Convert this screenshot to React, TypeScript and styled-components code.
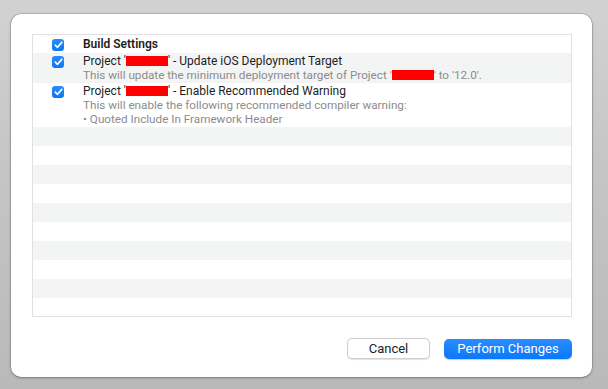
import React from "react";
import styled, { createGlobalStyle } from "styled-components";

const Global = createGlobalStyle`
  html, body { margin: 0; padding: 0; }
  body {
    width: 608px;
    height: 389px;
    overflow: hidden;
    font-family: Roboto, "Liberation Sans", sans-serif;
    -webkit-font-smoothing: antialiased;
  }
`;

const Backdrop = styled.div`
  width: 608px;
  height: 389px;
  box-sizing: border-box;
  padding: 14px 16px 12px 11px;
  background: linear-gradient(180deg, #d2d2d2 0%, #c6c6c6 40%, #b9b9b9 100%);
  display: flex;
`;

const Sheet = styled.div`
  width: 581px;
  height: 363px;
  box-sizing: border-box;
  background: #ffffff;
  border-radius: 10px;
  box-shadow: 0 0 0 0.5px rgba(0, 0, 0, 0.25), 0 1px 3px rgba(0, 0, 0, 0.25);
  padding: 20px 20px 18px 21px;
  display: flex;
  flex-direction: column;
`;

const Table = styled.div`
  height: 283px;
  box-sizing: border-box;
  border: 1px solid #e1e1e1;
  overflow: hidden;
  display: flex;
  flex-direction: column;
`;

const Row = styled.div<{ $striped: boolean; $h?: number; $pt?: number }>`
  flex: 0 0 auto;
  box-sizing: border-box;
  min-height: ${(p) => p.$h ?? 19}px;
  background: ${(p) => (p.$striped ? "#f3f4f4" : "#ffffff")};
  padding: ${(p) => p.$pt ?? 1}px 0 1px 19px;
  display: flex;
  align-items: flex-start;
  gap: 19px;
`;

const Check = styled.span`
  flex: 0 0 auto;
  width: 12px;
  height: 12px;
  margin-top: 2px;
  border-radius: 3px;
  background: linear-gradient(180deg, #2a8bff 0%, #0b76f5 100%);
  display: flex;
  align-items: center;
  justify-content: center;
`;

const Lines = styled.div`
  display: flex;
  flex-direction: column;
`;

const Title = styled.div<{ $bold?: boolean }>`
  font-size: 12px;
  line-height: 14px;
  color: #1e1e1e;
  font-weight: ${(p) => (p.$bold ? 600 : 400)};
  white-space: nowrap;
`;

const Sub = styled.div`
  font-size: 11.7px;
  line-height: 14px;
  color: #8c8c8c;
  white-space: nowrap;
`;

const Redact = styled.span<{ $w: number }>`
  display: inline-block;
  width: ${(p) => p.$w}px;
  height: 10px;
  background: #ff0000;
  vertical-align: -1px;
`;

const Footer = styled.div`
  margin-top: auto;
  display: flex;
  justify-content: flex-end;
  align-items: center;
  gap: 14px;
`;

const Button = styled.button<{ $primary?: boolean }>`
  font-family: inherit;
  font-size: 13px;
  height: ${(p) => (p.$primary ? 20 : 21)}px;
  width: ${(p) => (p.$primary ? 128 : 83)}px;
  border-radius: 5px;
  padding: 0;
  cursor: default;
  color: ${(p) => (p.$primary ? "#ffffff" : "#222222")};
  background: ${(p) =>
    p.$primary ? "linear-gradient(180deg, #2a8cff 0%, #0a78fb 100%)" : "#ffffff"};
  border: ${(p) => (p.$primary ? "none" : "0.5px solid #cfcfcf")};
  box-shadow: ${(p) =>
    p.$primary ? "0 0.5px 1px rgba(0,0,0,0.2)" : "0 0.5px 1px rgba(0,0,0,0.12)"};
`;

const Tick = () => (
  <Check>
    <svg width="9" height="8" viewBox="0 0 9 8">
      <path
        d="M1.3 4.2 L3.5 6.3 L7.8 1.4"
        fill="none"
        stroke="#fff"
        strokeWidth="1.7"
        strokeLinecap="round"
        strokeLinejoin="round"
      />
    </svg>
  </Check>
);

export default function App() {
  const empties = Array.from({ length: 10 }, (_, i) => i);
  return (
    <>
      <Global />
      <Backdrop>
        <Sheet>
          <Table>
            <Row $striped={false} $h={18} $pt={2}>
              <Tick />
              <Lines>
                <Title $bold>Build Settings</Title>
              </Lines>
            </Row>
            <Row $striped={true} $h={30}>
              <Tick />
              <Lines>
                <Title>
                  Project '<Redact $w={42} />' - Update iOS Deployment Target
                </Title>
                <Sub>
                  This will update the minimum deployment target of Project '
                  <Redact $w={42} />' to '12.0'.
                </Sub>
              </Lines>
            </Row>
            <Row $striped={false} $h={44}>
              <Tick />
              <Lines>
                <Title>
                  Project '<Redact $w={42} />' - Enable Recommended Warning
                </Title>
                <Sub>This will enable the following recommended compiler warning:</Sub>
                <Sub>• Quoted Include In Framework Header</Sub>
              </Lines>
            </Row>
            {empties.map((i) => (
              <Row key={i} $striped={i % 2 === 0} />
            ))}
          </Table>
          <Footer>
            <Button>Cancel</Button>
            <Button $primary>Perform Changes</Button>
          </Footer>
        </Sheet>
      </Backdrop>
    </>
  );
}
